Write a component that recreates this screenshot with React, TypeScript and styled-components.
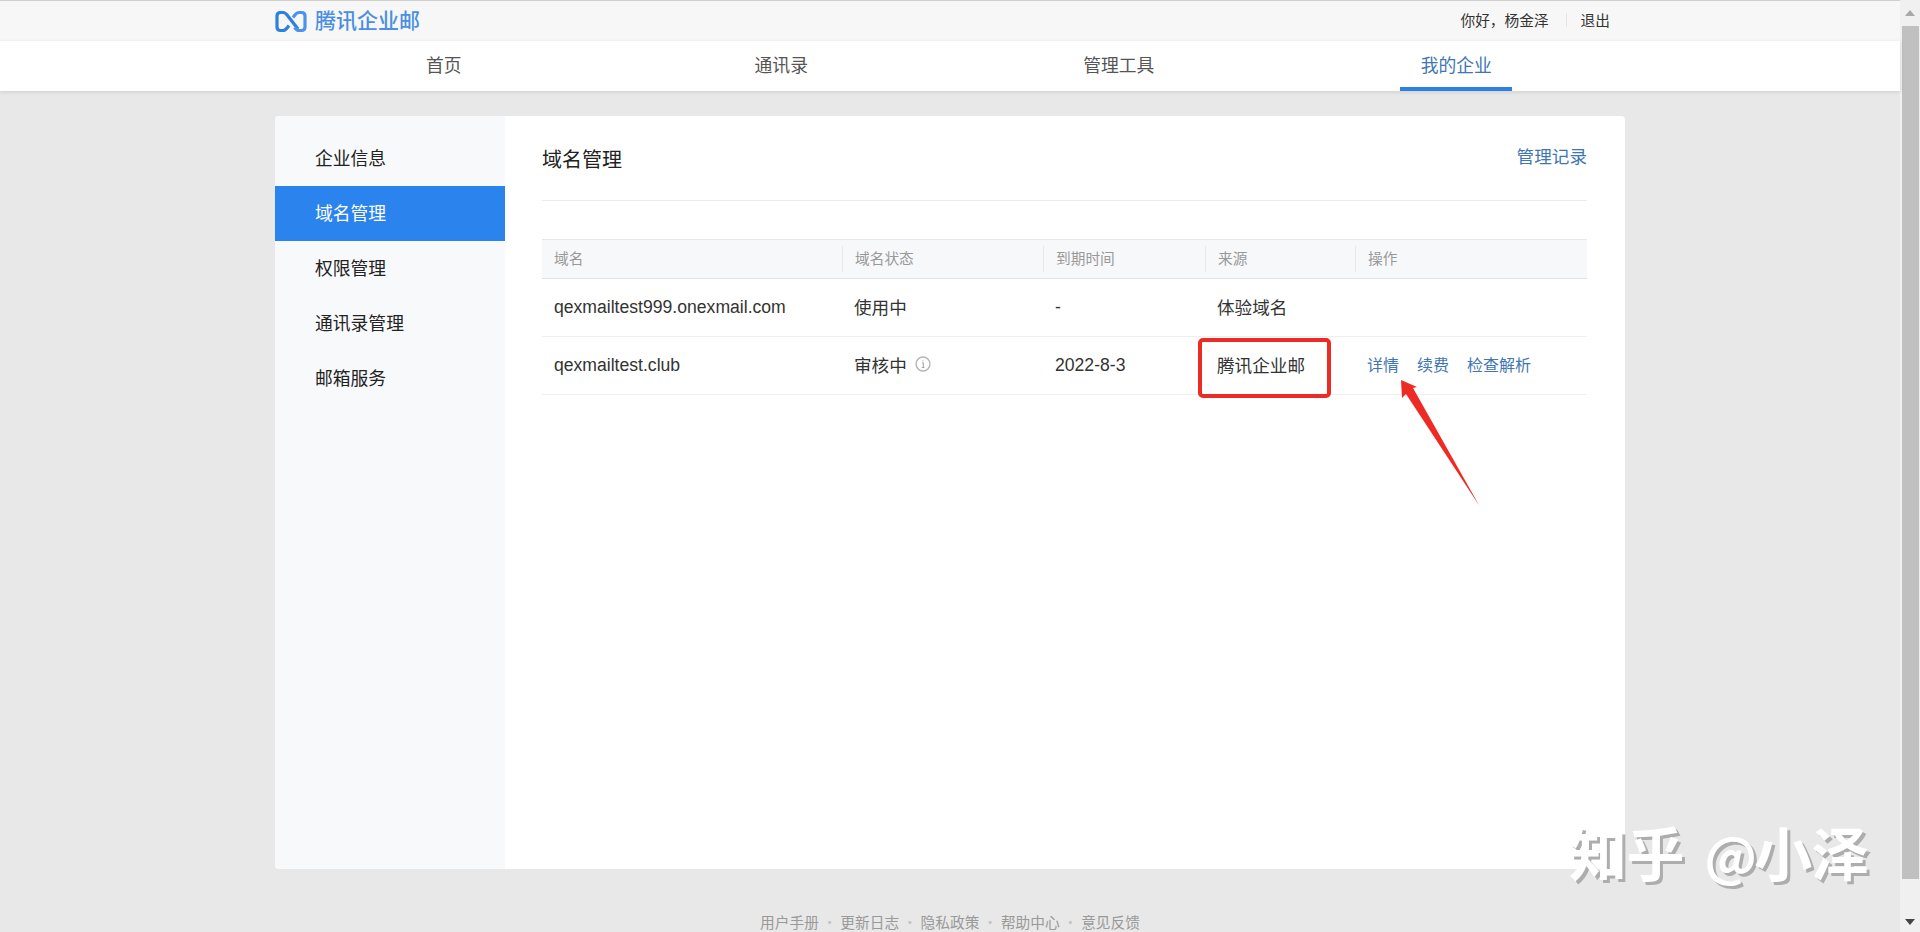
import { Fragment } from 'react';
import styled, { createGlobalStyle } from 'styled-components';

const cjk = '"Noto Sans CJK SC", "Liberation Sans", sans-serif';
const latin = '"Liberation Sans", "Noto Sans CJK SC", sans-serif';

const GlobalStyle = createGlobalStyle`
    html, body {
        margin: 0;
        padding: 0;
        height: 100%;
        overflow: hidden;
        background: #e8e8e8;
        font-family: ${cjk};
    }
`;

const Screen = styled.div`
    display: flex;
    width: 1920px;
    height: 932px;
    position: relative;
    overflow: hidden;
`;

const Page = styled.div`
    width: 1900px;
    height: 932px;
    display: flex;
    flex-direction: column;
    background: #e8e8e8;
`;

const TopBar = styled.div`
    height: 40px;
    flex: none;
    border-top: 1px solid #cfcfcf;
    background: #f7f7f7;
    display: flex;
    justify-content: center;
`;

const TopInner = styled.div`
    width: 1350px;
    display: flex;
    align-items: center;
    justify-content: space-between;
    padding-right: 15px;
    box-sizing: border-box;
`;

const Logo = styled.div`
    display: flex;
    align-items: center;
    gap: 8px;
    color: #4a8fe3;
    font-size: 21px;
    font-weight: 500;
    line-height: 22px;

    span {
        padding-bottom: 4px;
    }
`;

const UserBox = styled.div`
    display: flex;
    align-items: center;
    color: #333;
    font-size: 14.7px;
    padding-bottom: 3px;
`;

const UserDivider = styled.span`
    width: 1px;
    height: 14px;
    margin: 0 14px 0 17px;
    background: #e4e4e4;
`;

const Nav = styled.nav`
    height: 50px;
    flex: none;
    background: #fff;
    box-shadow: 0 1px 4px rgba(0, 0, 0, 0.12);
    display: flex;
    justify-content: center;
    position: relative;
`;

const NavInner = styled.div`
    width: 1350px;
    display: grid;
    grid-template-columns: repeat(4, 1fr);
`;

const NavItem = styled.div<{ $active?: boolean }>`
    display: flex;
    justify-content: center;
    align-items: center;
    height: 50px;
    font-size: 17.8px;
    padding-bottom: 4px;
    box-sizing: border-box;
    color: ${(p) => (p.$active ? '#3f76b4' : '#555')};
    position: relative;

    &::after {
        content: '';
        display: ${(p) => (p.$active ? 'block' : 'none')};
        position: absolute;
        bottom: 0;
        left: 50%;
        width: 112px;
        height: 4px;
        margin-left: -56px;
        background: #2f80e4;
    }
`;

const Card = styled.div`
    width: 1350px;
    height: 753px;
    margin: 25px auto 0;
    flex: none;
    display: flex;
    background: #fff;
    border-radius: 4px;
    overflow: hidden;
`;

const Side = styled.aside`
    width: 230px;
    flex: none;
    padding-top: 15px;
    box-sizing: border-box;
    background: #f8f9fb;
`;

const SideItem = styled.div<{ $active?: boolean }>`
    height: 55px;
    padding: 0 0 4px 40px;
    box-sizing: border-box;
    display: flex;
    align-items: center;
    font-size: 17.8px;
    color: ${(p) => (p.$active ? '#fff' : '#222')};
    background: ${(p) => (p.$active ? '#2b83ee' : 'transparent')};
`;

const Main = styled.main`
    flex: 1;
    padding: 0 38px 0 37px;
`;

const MainHead = styled.div`
    height: 85px;
    display: flex;
    justify-content: space-between;
    align-items: flex-start;
    padding-top: 28px;
    box-sizing: border-box;
    border-bottom: 1px solid #ececec;
`;

const Title = styled.h2`
    margin: 0;
    font-size: 20px;
    font-weight: 400;
    line-height: 30px;
    color: #222;
`;

const RecordLink = styled.a`
    font-size: 17.6px;
    line-height: 24px;
    color: #3f76b4;
`;

const Table = styled.div`
    margin-top: 38px;
`;

const Row = styled.div<{ $head?: boolean }>`
    display: grid;
    grid-template-columns: 300px 201px 162px 150px 1fr;
    align-items: center;
    height: ${(p) => (p.$head ? '40px' : '58px')};
    box-sizing: border-box;
    background: ${(p) => (p.$head ? '#f7f8fa' : '#fff')};
    border-top: ${(p) => (p.$head ? '1px solid #e5e7ea' : 'none')};
    border-bottom: 1px solid ${(p) => (p.$head ? '#dfe1e4' : '#eeeff1')};
`;

const HeadCell = styled.div<{ $first?: boolean }>`
    height: 26px;
    padding: 0 0 4px 12px;
    box-sizing: border-box;
    display: flex;
    align-items: center;
    font-size: 14.7px;
    color: #999;
    border-left: ${(p) => (p.$first ? 'none' : '1px solid #e6e7ea')};
`;

const Cell = styled.div<{ $latin?: boolean }>`
    padding: ${(p) => (p.$latin ? '0 0 0 12px' : '0 0 3px 12px')};
    display: flex;
    align-items: center;
    gap: 8px;
    font-family: ${(p) => (p.$latin ? latin : cjk)};
    font-size: 17.6px;
    color: #333;
`;

const Actions = styled.div`
    padding: 0 0 3px 12px;
    display: flex;
    gap: 18px;
`;

const ActionLink = styled.a`
    font-size: 16px;
    color: #3f76b4;
`;

const Footer = styled.footer`
    flex: 1;
    display: flex;
    justify-content: center;
    align-items: flex-end;
    padding-bottom: 1px;
    font-size: 14.7px;
    line-height: 18px;
    color: #999;
`;

const Dot = styled.span`
    width: 21.5px;
    text-align: center;
    color: #c4c4c4;
`;

const RedBox = styled.div`
    position: absolute;
    left: 1198px;
    top: 338px;
    width: 133px;
    height: 60px;
    box-sizing: border-box;
    border: 4px solid #ee2a24;
    border-radius: 5px;
`;

const ArrowMark = styled.svg`
    position: absolute;
    left: 1395px;
    top: 375px;
`;

const Watermark = styled.div`
    position: absolute;
    left: 1569px;
    top: 811px;
    font-family: "Noto Sans CJK SC", sans-serif;
    font-size: 58px;
    line-height: 80px;
    font-weight: 700;
    letter-spacing: -0.6px;
    white-space: pre;
    color: #fff;
    text-shadow: 3px 3px 0 #adadad;
`;

const WatermarkAt = styled.span`
    font-size: 52px;
    margin: 0 -2px 0 8px;
`;

const Scrollbar = styled.div`
    width: 20px;
    height: 932px;
    flex: none;
    background: #f0f0f0;
    display: flex;
    flex-direction: column;
    align-items: center;
`;

const ScrollButton = styled.div`
    height: 26px;
    flex: none;
    display: flex;
    align-items: center;
    justify-content: center;
`;

const ScrollThumb = styled.div`
    width: 17px;
    height: 853px;
    flex: none;
    background: #c0c0c0;
`;

const ScrollEnd = styled.div`
    flex: 1;
    display: flex;
    align-items: flex-end;
    padding-bottom: 7px;
`;

const LogoMark = () => (
    <svg width="32" height="23" viewBox="0 0 32 23" fill="none">
        <path
            d="M23 19L12.500 5.500C11 3.500 10 2.500 8 2.500H5.500C3 2.500 2 3.500 2 6V17C2 19.500 3 20.500 5.500 20.500H8C10 20.500 11 19.500 12.500 17.500L14 15.500"
            stroke="#2f7fe0"
            strokeWidth="3.200"
        />
        <path
            d="M18 7.500L19.500 5.500C21 3.500 22 2.500 24 2.500H26.500C29 2.500 30 3.500 30 6V17C30 19.500 29 20.500 26.500 20.500H24C22 20.500 21 19.500 19.500 17.500"
            stroke="#4a93e8"
            strokeWidth="3.200"
        />
    </svg>
);

const InfoIcon = () => (
    <svg width="16" height="16" viewBox="0 0 15 15" fill="none">
        <circle cx="7.5" cy="7.500" r="6.500" stroke="#b5b5b5" strokeWidth="1.300" />
        <path d="M6.500 6.500h1.300v4M6.300 10.700h2.600M7.500 4v.9" stroke="#a5a5a5" strokeWidth="1" />
    </svg>
);

const tabs = ['首页', '通讯录', '管理工具', '我的企业'];
const menu = ['企业信息', '域名管理', '权限管理', '通讯录管理', '邮箱服务'];
const heads = ['域名', '域名状态', '到期时间', '来源', '操作'];
const footerLinks = ['用户手册', '更新日志', '隐私政策', '帮助中心', '意见反馈'];

export default function App() {
    return (
        <Screen>
            <GlobalStyle />
            <Page>
                <TopBar>
                    <TopInner>
                        <Logo>
                            <LogoMark />
                            <span>腾讯企业邮</span>
                        </Logo>
                        <UserBox>
                            <span>{'你好\uFF0C杨金泽'}</span>
                            <UserDivider />
                            <span>退出</span>
                        </UserBox>
                    </TopInner>
                </TopBar>
                <Nav>
                    <NavInner>
                        {tabs.map((t) => (
                            <NavItem key={t} $active={t === '我的企业'}>
                                {t}
                            </NavItem>
                        ))}
                    </NavInner>
                </Nav>
                <Card>
                    <Side>
                        {menu.map((m) => (
                            <SideItem key={m} $active={m === '域名管理'}>
                                {m}
                            </SideItem>
                        ))}
                    </Side>
                    <Main>
                        <MainHead>
                            <Title>域名管理</Title>
                            <RecordLink>管理记录</RecordLink>
                        </MainHead>
                        <Table>
                            <Row $head>
                                {heads.map((h, i) => (
                                    <HeadCell key={h} $first={i === 0}>
                                        {h}
                                    </HeadCell>
                                ))}
                            </Row>
                            <Row>
                                <Cell $latin>qexmailtest999.onexmail.com</Cell>
                                <Cell>使用中</Cell>
                                <Cell $latin>-</Cell>
                                <Cell>体验域名</Cell>
                            </Row>
                            <Row>
                                <Cell $latin>qexmailtest.club</Cell>
                                <Cell>
                                    审核中
                                    <InfoIcon />
                                </Cell>
                                <Cell $latin>2022-8-3</Cell>
                                <Cell>腾讯企业邮</Cell>
                                <Actions>
                                    <ActionLink>详情</ActionLink>
                                    <ActionLink>续费</ActionLink>
                                    <ActionLink>检查解析</ActionLink>
                                </Actions>
                            </Row>
                        </Table>
                    </Main>
                </Card>
                <Footer>
                    {footerLinks.map((f, i) => (
                        <Fragment key={f}>
                            {i > 0 && <Dot>·</Dot>}
                            <span>{f}</span>
                        </Fragment>
                    ))}
                </Footer>
            </Page>
            <Scrollbar>
                <ScrollButton>
                    <svg width="10" height="6" viewBox="0 0 10 6">
                        <path d="M5 0L10 6H0z" fill="#a8a8a8" />
                    </svg>
                </ScrollButton>
                <ScrollThumb />
                <ScrollEnd>
                    <svg width="10" height="6" viewBox="0 0 10 6">
                        <path d="M0 0H10L5 6z" fill="#444" />
                    </svg>
                </ScrollEnd>
            </Scrollbar>
            <RedBox />
            <ArrowMark width="90" height="136" viewBox="1395 375 90 136">
                <path d="M1401 380L1417 387L1413 388L1479.500 506L1406 394L1402 398Z" fill="#ee2a24" />
            </ArrowMark>
            <Watermark>
                知乎 <WatermarkAt>@</WatermarkAt>小泽
            </Watermark>
        </Screen>
    );
}
